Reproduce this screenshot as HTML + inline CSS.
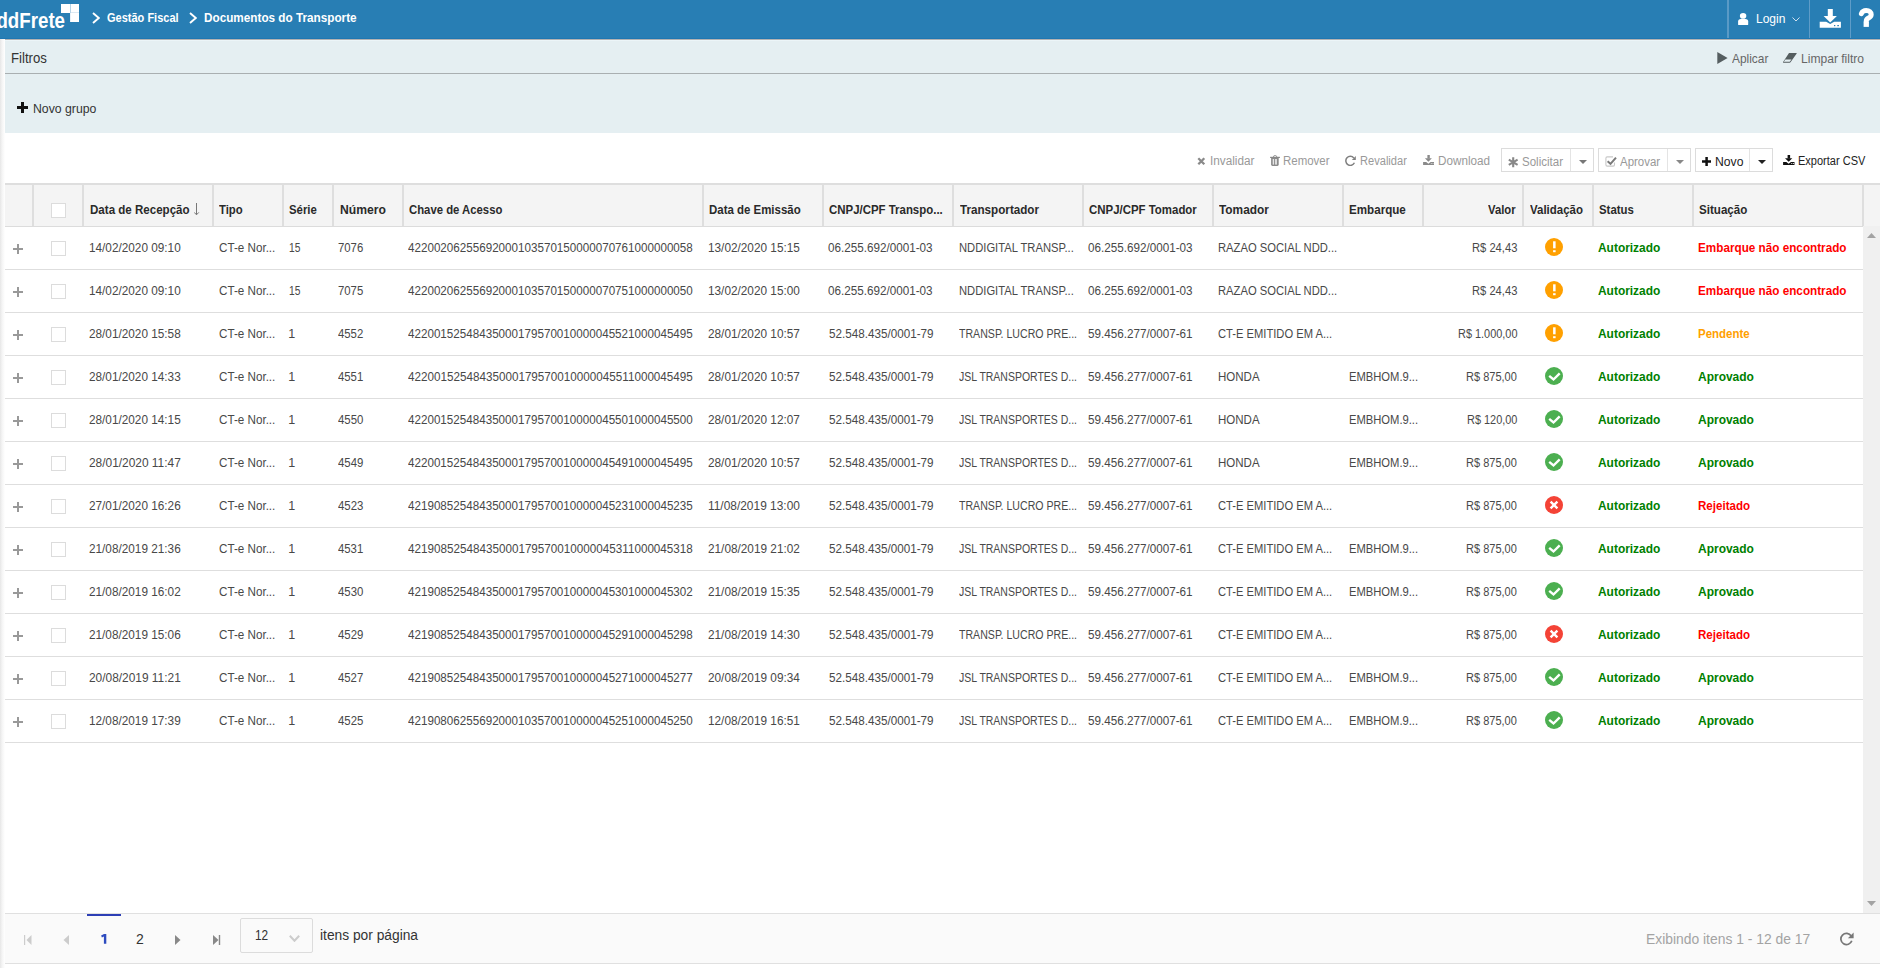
<!DOCTYPE html>
<html><head><meta charset="utf-8"><title>Documentos do Transporte</title>
<style>
html,body{margin:0;padding:0;}
body{width:1880px;height:968px;overflow:hidden;position:relative;background:#fff;font-family:"Liberation Sans", sans-serif;}
.t{position:absolute;white-space:nowrap;font-family:"Liberation Sans", sans-serif;transform-origin:0 0;}
svg{display:block;}
</style></head><body>
<div style="position:absolute;left:0;top:0;width:1880px;height:39px;background:#287eb4;"></div>
<div style="position:absolute;left:0;top:38px;width:1880px;height:1px;background:#1f77b2;"></div>
<div style="position:absolute;left:5px;top:39px;width:1875px;height:1px;background:#b3b3b3;"></div>
<span class="t" id="t0" style="left:-15.00px;top:10.50px;font-size:21.5px;line-height:21.5px;color:#fff;font-weight:bold;transform:scaleX(0.87);">nddFrete</span>
<div style="position:absolute;left:61px;top:4px;width:9px;height:8.6px;background:#fff;"></div>
<div style="position:absolute;left:70px;top:4px;width:1px;height:8.6px;background:#b5d4e8;"></div>
<div style="position:absolute;left:70px;top:12.6px;width:1px;height:9.2px;background:#e8f1f8;"></div>
<div style="position:absolute;left:71px;top:4px;width:8px;height:17.8px;background:#fff;"></div>
<div style="position:absolute;left:71px;top:12.4px;width:8px;height:0.6px;background:#dde9f2;"></div>
<svg style="position:absolute;left:91.5px;top:12px" width="8" height="12" viewBox="0 0 8 12"><polyline points="1,1 6.8,6.0 1,11" fill="none" stroke="#fff" stroke-width="1.9"/></svg>
<svg style="position:absolute;left:189.3px;top:12px" width="8" height="12" viewBox="0 0 8 12"><polyline points="1,1 6.8,6.0 1,11" fill="none" stroke="#fff" stroke-width="1.9"/></svg>
<span class="t" id="t1" style="left:107.00px;top:10.70px;font-size:13px;line-height:13px;color:#fff;transform:scaleX(0.8471);font-weight:bold;">Gestão Fiscal</span>
<span class="t" id="t2" style="left:204.38px;top:10.70px;font-size:13px;line-height:13px;color:#fff;transform:scaleX(0.9030);font-weight:bold;">Documentos do Transporte</span>
<div style="position:absolute;left:1727px;top:0;width:2px;height:38px;background:#5a9ac6;"></div>
<div style="position:absolute;left:1809px;top:0;width:1px;height:38px;background:#5e9cc8;"></div>
<div style="position:absolute;left:1850px;top:0;width:1px;height:38px;background:#5e9cc8;"></div>
<svg style="position:absolute;left:1738px;top:13px" width="11" height="13" viewBox="0 0 11 13"><ellipse cx="5.1" cy="2.9" rx="3.2" ry="2.8" fill="#fff"/><path d="M0.1 11.4 V8.6 Q0.1 5.9 2.8 5.9 H7.4 Q10.2 5.9 10.2 8.6 V11.4 Q10.2 12.1 9.5 12.1 H0.8 Q0.1 12.1 0.1 11.4 Z" fill="#fff"/></svg>
<span class="t" id="t3" style="left:1755.83px;top:11.80px;font-size:13px;line-height:13px;color:#fff;transform:scaleX(0.9236);">Login</span>
<svg style="position:absolute;left:1791.5px;top:16.5px" width="8" height="5" viewBox="0 0 8 5"><polyline points="0.5,0.5 4,4 7.5,0.5" fill="none" stroke="#cfe0ee" stroke-width="1"/></svg>
<svg style="position:absolute;left:1819px;top:9px" width="23" height="20" viewBox="0 0 23 20"><rect x="8.8" y="0" width="5" height="7.2" fill="#fff"/><path d="M4.6 6.9 H17.9 L11.2 13.6 Z" fill="#fff"/><path d="M0.7 12.75 H7.2 L11.2 14.9 L15.2 12.75 H21.9 V18.8 H0.7 Z" fill="#fff"/><rect x="15" y="16" width="1.3" height="1.2" fill="#287eb4"/><rect x="18.3" y="16" width="1.6" height="1.2" fill="#287eb4"/></svg>
<svg style="position:absolute;left:1850px;top:4px" width="30" height="28" viewBox="0 0 30 28"><path d="M11.4 9.6 C12.3 7.4 14 6.55 16.3 6.55 C19.3 6.55 21.2 8.3 21.2 10.4 C21.2 12.3 19.9 13.2 18.5 14 C17 14.8 16.25 15.6 16.25 17.3" fill="none" stroke="#fff" stroke-width="5" stroke-linecap="round"/><rect x="13.6" y="17.6" width="5.3" height="5.3" fill="#fff"/></svg>
<div style="position:absolute;left:0;top:39px;width:5px;height:929px;background:linear-gradient(to right,#e6e6e6,#f4f4f4 40%,#fff);"></div>
<div style="position:absolute;left:5px;top:40px;width:1875px;height:93px;background:#e5eff2;"></div>
<div style="position:absolute;left:5px;top:40px;width:1875px;height:1px;background:#ecf5f8;"></div>
<div style="position:absolute;left:5px;top:73px;width:1875px;height:1px;background:#a9afb1;"></div>
<span class="t" id="t4" style="left:10.62px;top:51.05px;font-size:14px;line-height:14px;color:#333;transform:scaleX(0.9426);">Filtros</span>
<svg style="position:absolute;left:1716.5px;top:52px" width="11" height="12" viewBox="0 0 11 12"><path d="M0.3 0.1 L10.6 6 L0.3 12 Z" fill="#555e60"/></svg>
<span class="t" id="t5" style="left:1732.31px;top:52.20px;font-size:13px;line-height:13px;color:#666;transform:scaleX(0.9151);">Aplicar</span>
<svg style="position:absolute;left:1781.5px;top:52px" width="16" height="12" viewBox="0 0 16 12"><path d="M7 1 H14.4 Q15.1 1 14.7 1.6 L8.5 10.3 Q8.2 10.7 7.7 10.7 H1.5 Q0.7 10.7 1.1 10.1 Z" fill="#555e60"/><path d="M3.4 7.5 H9.5 L7.7 9.8 H1.8 Z" fill="#e5eff2"/></svg>
<span class="t" id="t6" style="left:1801.14px;top:52.20px;font-size:13px;line-height:13px;color:#666;transform:scaleX(0.9289);">Limpar filtro</span>
<svg style="position:absolute;left:17px;top:102px" width="11" height="11" viewBox="0 0 11 11"><path d="M4 0 H7 V4 H11 V7 H7 V11 H4 V7 H0 V4 H4 Z" fill="#111"/></svg>
<span class="t" id="t7" style="left:32.90px;top:103.02px;font-size:12.5px;line-height:12.5px;color:#333;transform:scaleX(0.9814);">Novo grupo</span>
<svg style="position:absolute;left:1197px;top:157px" width="9" height="9" viewBox="0 0 9 9"><path d="M1.3 1.3 L7.3 7.3 M7.3 1.3 L1.3 7.3" stroke="#8a8a8a" stroke-width="2.3"/></svg>
<span class="t" id="t8" style="left:1209.62px;top:155.02px;font-size:12.5px;line-height:12.5px;color:#999;transform:scaleX(0.9406);">Invalidar</span>
<svg style="position:absolute;left:1270px;top:155px" width="11" height="12" viewBox="0 0 11 12"><path d="M3.4 2 Q3.4 0.5 5.1 0.5 Q6.8 0.5 6.8 2" fill="none" stroke="#999" stroke-width="1"/><rect x="0.1" y="1.8" width="9.8" height="1.2" fill="#888"/><path d="M1.1 3 H8.7 V9.6 Q8.7 10.9 7.4 10.9 H2.4 Q1.1 10.9 1.1 9.6 Z" fill="#8a8a8a"/><rect x="2.7" y="4" width="1.4" height="5.6" fill="#e6e6e6"/><rect x="5" y="4" width="2" height="5.6" fill="#dcdcdc"/></svg>
<span class="t" id="t9" style="left:1283.00px;top:155.02px;font-size:12.5px;line-height:12.5px;color:#999;transform:scaleX(0.9178);">Remover</span>
<svg style="position:absolute;left:1345px;top:155px" width="11" height="11" viewBox="0 0 11 11"><path d="M8.8 3 A4.5 4.5 0 1 0 9.4 7.8" fill="none" stroke="#808080" stroke-width="1.5"/><path d="M10.8 0.9 V4.9 H6.8 Z" fill="#808080"/></svg>
<span class="t" id="t10" style="left:1359.62px;top:155.02px;font-size:12.5px;line-height:12.5px;color:#999;transform:scaleX(0.8868);">Revalidar</span>
<svg style="position:absolute;left:1423px;top:155px" width="12" height="11" viewBox="0 0 12 11"><rect x="4.40" y="0" width="2.40" height="3.6" fill="#8a8a8a"/><path d="M1.90 3.3 H8.90 L5.40 6.8 Z" fill="#8a8a8a"/><path d="M0.1 7 H3.20 L5.40 8.7 L7.60 7 H11.00 V9.9 H0.1 Z" fill="#8a8a8a"/><rect x="7.80" y="8.2" width="1.10" height="0.8" fill="#ddd"/><rect x="9.50" y="8.2" width="1.10" height="0.8" fill="#ddd"/></svg>
<span class="t" id="t11" style="left:1438.00px;top:155.02px;font-size:12.5px;line-height:12.5px;color:#999;transform:scaleX(0.9359);">Download</span>
<div style="position:absolute;left:1501px;top:148px;width:91px;height:22px;border:1px solid #dcdcdc;background:#fff;"></div><div style="position:absolute;left:1570px;top:149px;width:1px;height:22px;background:#e4e4e4;"></div>
<div style="position:absolute;left:1598px;top:148px;width:91px;height:22px;border:1px solid #dcdcdc;background:#fff;"></div><div style="position:absolute;left:1667px;top:149px;width:1px;height:22px;background:#e4e4e4;"></div>
<div style="position:absolute;left:1695px;top:148px;width:76px;height:22px;border:1px solid #dcdcdc;background:#fff;"></div><div style="position:absolute;left:1749px;top:149px;width:1px;height:22px;background:#e4e4e4;"></div>
<svg style="position:absolute;left:1508.2px;top:156.5px" width="11" height="11" viewBox="0 0 11 11"><path d="M5.2 0.2 V10.3 M0.8 2.7 L9.6 7.8 M9.6 2.7 L0.8 7.8" stroke="#888" stroke-width="2.1"/></svg>
<span class="t" id="t12" style="left:1522.23px;top:155.92px;font-size:12.5px;line-height:12.5px;color:#999;transform:scaleX(0.9233);">Solicitar</span>
<svg style="position:absolute;left:1579.2px;top:160px" width="8" height="4" viewBox="0 0 8 4"><path d="M0 0 H8 L4 4 Z" fill="#777"/></svg>
<svg style="position:absolute;left:1604.5px;top:156px" width="12" height="11" viewBox="0 0 12 11"><path d="M8 0.9 H2.2 Q0.9 0.9 0.9 2.2 V8.8 Q0.9 10.1 2.2 10.1 H8.2 Q9.5 10.1 9.5 8.8 V6.5" fill="none" stroke="#c8c8c8" stroke-width="1.1"/><path d="M2.6 5.3 L5.5 7.8 L11 1.6" fill="none" stroke="#7a7a7a" stroke-width="2"/></svg>
<span class="t" id="t13" style="left:1620.00px;top:155.92px;font-size:12.5px;line-height:12.5px;color:#999;transform:scaleX(0.9183);">Aprovar</span>
<svg style="position:absolute;left:1676px;top:160px" width="8" height="4" viewBox="0 0 8 4"><path d="M0 0 H8 L4 4 Z" fill="#888"/></svg>
<svg style="position:absolute;left:1702px;top:156.7px" width="9.2" height="9.2" viewBox="0 0 9.2 9.2"><path d="M3.35 0 H5.85 V3.35 H9.2 V5.85 H5.85 V9.2 H3.35 V5.85 H0 V3.35 H3.35 Z" fill="#111"/></svg>
<span class="t" id="t14" style="left:1715.00px;top:155.92px;font-size:12.5px;line-height:12.5px;color:#222;transform:scaleX(0.9729);">Novo</span>
<svg style="position:absolute;left:1758px;top:160px" width="8" height="4" viewBox="0 0 8 4"><path d="M0 0 H8 L4 4 Z" fill="#222"/></svg>
<svg style="position:absolute;left:1783px;top:155px" width="12.5" height="11" viewBox="0 0 12.5 11"><rect x="4.60" y="0" width="2.51" height="3.6" fill="#111"/><path d="M1.99 3.3 H9.30 L5.65 6.8 Z" fill="#111"/><path d="M0.1 7 H3.35 L5.65 8.7 L7.95 7 H11.50 V9.9 H0.1 Z" fill="#111"/><rect x="8.15" y="8.2" width="1.15" height="0.8" fill="#fff"/><rect x="9.93" y="8.2" width="1.15" height="0.8" fill="#fff"/></svg>
<span class="t" id="t15" style="left:1797.93px;top:155.02px;font-size:12.5px;line-height:12.5px;color:#222;transform:scaleX(0.8818);">Exportar CSV</span>
<div style="position:absolute;left:5px;top:183px;width:1875px;height:2px;background:#dedede;"></div>
<div style="position:absolute;left:5px;top:185px;width:1875px;height:41px;background:#f4f4f4;"></div>
<div style="position:absolute;left:5px;top:226px;width:1858px;height:1px;background:#dcdcdc;"></div>
<div style="position:absolute;left:32px;top:185px;width:2px;height:41px;background:#dedede;"></div>
<div style="position:absolute;left:82px;top:185px;width:2px;height:41px;background:#dedede;"></div>
<div style="position:absolute;left:212px;top:185px;width:2px;height:41px;background:#dedede;"></div>
<div style="position:absolute;left:282px;top:185px;width:2px;height:41px;background:#dedede;"></div>
<div style="position:absolute;left:332px;top:185px;width:2px;height:41px;background:#dedede;"></div>
<div style="position:absolute;left:402px;top:185px;width:2px;height:41px;background:#dedede;"></div>
<div style="position:absolute;left:702px;top:185px;width:2px;height:41px;background:#dedede;"></div>
<div style="position:absolute;left:822px;top:185px;width:2px;height:41px;background:#dedede;"></div>
<div style="position:absolute;left:952px;top:185px;width:2px;height:41px;background:#dedede;"></div>
<div style="position:absolute;left:1082px;top:185px;width:2px;height:41px;background:#dedede;"></div>
<div style="position:absolute;left:1212px;top:185px;width:2px;height:41px;background:#dedede;"></div>
<div style="position:absolute;left:1342px;top:185px;width:2px;height:41px;background:#dedede;"></div>
<div style="position:absolute;left:1422px;top:185px;width:2px;height:41px;background:#dedede;"></div>
<div style="position:absolute;left:1522px;top:185px;width:2px;height:41px;background:#dedede;"></div>
<div style="position:absolute;left:1592px;top:185px;width:2px;height:41px;background:#dedede;"></div>
<div style="position:absolute;left:1692px;top:185px;width:2px;height:41px;background:#dedede;"></div>
<div style="position:absolute;left:1862px;top:185px;width:2px;height:41px;background:#dedede;"></div>
<div style="position:absolute;left:51px;top:203px;width:13px;height:13px;border:1px solid #dcdcdc;background:#fff;"></div>
<span class="t" id="t16" style="left:89.87px;top:203.00px;font-size:13px;line-height:13px;color:#2a2a2a;transform:scaleX(0.8893);font-weight:bold;">Data de Recepção</span>
<span class="t" id="t17" style="left:219.06px;top:203.00px;font-size:13px;line-height:13px;color:#2a2a2a;transform:scaleX(0.8723);font-weight:bold;">Tipo</span>
<span class="t" id="t18" style="left:289.31px;top:203.00px;font-size:13px;line-height:13px;color:#2a2a2a;transform:scaleX(0.8750);font-weight:bold;">Série</span>
<span class="t" id="t19" style="left:339.54px;top:203.00px;font-size:13px;line-height:13px;color:#2a2a2a;transform:scaleX(0.9349);font-weight:bold;">Número</span>
<span class="t" id="t20" style="left:409.00px;top:203.00px;font-size:13px;line-height:13px;color:#2a2a2a;transform:scaleX(0.8711);font-weight:bold;">Chave de Acesso</span>
<span class="t" id="t21" style="left:709.38px;top:203.00px;font-size:13px;line-height:13px;color:#2a2a2a;transform:scaleX(0.8808);font-weight:bold;">Data de Emissão</span>
<span class="t" id="t22" style="left:829.00px;top:203.00px;font-size:13px;line-height:13px;color:#2a2a2a;transform:scaleX(0.8796);font-weight:bold;">CNPJ/CPF Transpo...</span>
<span class="t" id="t23" style="left:959.76px;top:203.00px;font-size:13px;line-height:13px;color:#2a2a2a;transform:scaleX(0.8967);font-weight:bold;">Transportador</span>
<span class="t" id="t24" style="left:1089.00px;top:203.00px;font-size:13px;line-height:13px;color:#2a2a2a;transform:scaleX(0.8797);font-weight:bold;">CNPJ/CPF Tomador</span>
<span class="t" id="t25" style="left:1219.00px;top:203.00px;font-size:13px;line-height:13px;color:#2a2a2a;transform:scaleX(0.9129);font-weight:bold;">Tomador</span>
<span class="t" id="t26" style="left:1349.00px;top:203.00px;font-size:13px;line-height:13px;color:#2a2a2a;transform:scaleX(0.8939);font-weight:bold;">Embarque</span>
<span class="t" id="t27" style="left:1488.43px;top:203.00px;font-size:13px;line-height:13px;color:#2a2a2a;transform:scaleX(0.8668);font-weight:bold;">Valor</span>
<span class="t" id="t28" style="left:1529.75px;top:203.00px;font-size:13px;line-height:13px;color:#2a2a2a;transform:scaleX(0.8821);font-weight:bold;">Validação</span>
<span class="t" id="t29" style="left:1598.68px;top:203.00px;font-size:13px;line-height:13px;color:#2a2a2a;transform:scaleX(0.8756);font-weight:bold;">Status</span>
<span class="t" id="t30" style="left:1699.31px;top:203.00px;font-size:13px;line-height:13px;color:#2a2a2a;transform:scaleX(0.8927);font-weight:bold;">Situação</span>
<svg style="position:absolute;left:194px;top:203px" width="6" height="13" viewBox="0 0 6 13"><path d="M2.5 0 V11.6" stroke="#777" stroke-width="1"/><path d="M0.2 9.4 L2.5 11.8 L4.8 9.4" fill="none" stroke="#777" stroke-width="1"/></svg>
<div style="position:absolute;left:5px;top:269px;width:1858px;height:1px;background:#dedede;"></div>
<svg style="position:absolute;left:13px;top:243.5px" width="10" height="10" viewBox="0 0 10 10"><path d="M4 0 H6 V4 H10 V6 H6 V10 H4 V6 H0 V4 H4 Z" fill="#999"/></svg>
<div style="position:absolute;left:51px;top:241px;width:13px;height:13px;border:1px solid #dcdcdc;background:#fff;"></div>
<span class="t" id="t31" style="left:88.61px;top:242.22px;font-size:12.5px;line-height:12.5px;color:#484848;transform:scaleX(0.9423);">14/02/2020 09:10</span>
<span class="t" id="t32" style="left:218.83px;top:242.22px;font-size:12.5px;line-height:12.5px;color:#484848;transform:scaleX(0.9325);">CT-e Nor...</span>
<span class="t" id="t33" style="left:289.34px;top:242.22px;font-size:12.5px;line-height:12.5px;color:#484848;transform:scaleX(0.8180);">15</span>
<span class="t" id="t34" style="left:338.23px;top:242.22px;font-size:12.5px;line-height:12.5px;color:#484848;transform:scaleX(0.9080);">7076</span>
<span class="t" id="t35" style="left:408.00px;top:242.22px;font-size:12.5px;line-height:12.5px;color:#484848;transform:scaleX(0.9310);">42200206255692000103570150000070761000000058</span>
<span class="t" id="t36" style="left:708.00px;top:242.22px;font-size:12.5px;line-height:12.5px;color:#484848;transform:scaleX(0.9437);">13/02/2020 15:15</span>
<span class="t" id="t37" style="left:828.46px;top:242.22px;font-size:12.5px;line-height:12.5px;color:#484848;transform:scaleX(0.9346);">06.255.692/0001-03</span>
<span class="t" id="t38" style="left:958.86px;top:242.22px;font-size:12.5px;line-height:12.5px;color:#484848;transform:scaleX(0.8969);">NDDIGITAL TRANSP...</span>
<span class="t" id="t39" style="left:1088.08px;top:242.22px;font-size:12.5px;line-height:12.5px;color:#484848;transform:scaleX(0.9340);">06.255.692/0001-03</span>
<span class="t" id="t40" style="left:1218.06px;top:242.22px;font-size:12.5px;line-height:12.5px;color:#484848;transform:scaleX(0.8971);">RAZAO SOCIAL NDD...</span>
<span class="t" id="t41" style="left:1472.23px;top:242.22px;font-size:12.5px;line-height:12.5px;color:#484848;transform:scaleX(0.8944);">R$ 24,43</span>
<svg style="position:absolute;left:1545.1px;top:238px" width="18" height="18" viewBox="0 0 18 18"><circle cx="9" cy="9" r="9" fill="#ffa000"/><rect x="8.1" y="3.3" width="2.5" height="7" fill="#fff"/><rect x="8.1" y="12.2" width="2.5" height="2" fill="#fff"/></svg>
<span class="t" id="t42" style="left:1597.69px;top:241.00px;font-size:13px;line-height:13px;color:#008000;transform:scaleX(0.9178);font-weight:bold;">Autorizado</span>
<span class="t" id="t43" style="left:1698.38px;top:241.00px;font-size:13px;line-height:13px;color:#f00;transform:scaleX(0.9018);font-weight:bold;">Embarque não encontrado</span>
<div style="position:absolute;left:5px;top:312px;width:1858px;height:1px;background:#dedede;"></div>
<svg style="position:absolute;left:13px;top:286.5px" width="10" height="10" viewBox="0 0 10 10"><path d="M4 0 H6 V4 H10 V6 H6 V10 H4 V6 H0 V4 H4 Z" fill="#999"/></svg>
<div style="position:absolute;left:51px;top:284px;width:13px;height:13px;border:1px solid #dcdcdc;background:#fff;"></div>
<span class="t" id="t44" style="left:88.61px;top:285.22px;font-size:12.5px;line-height:12.5px;color:#484848;transform:scaleX(0.9423);">14/02/2020 09:10</span>
<span class="t" id="t45" style="left:218.83px;top:285.22px;font-size:12.5px;line-height:12.5px;color:#484848;transform:scaleX(0.9325);">CT-e Nor...</span>
<span class="t" id="t46" style="left:289.34px;top:285.22px;font-size:12.5px;line-height:12.5px;color:#484848;transform:scaleX(0.8180);">15</span>
<span class="t" id="t47" style="left:338.23px;top:285.22px;font-size:12.5px;line-height:12.5px;color:#484848;transform:scaleX(0.9080);">7075</span>
<span class="t" id="t48" style="left:408.00px;top:285.22px;font-size:12.5px;line-height:12.5px;color:#484848;transform:scaleX(0.9310);">42200206255692000103570150000070751000000050</span>
<span class="t" id="t49" style="left:708.00px;top:285.22px;font-size:12.5px;line-height:12.5px;color:#484848;transform:scaleX(0.9437);">13/02/2020 15:00</span>
<span class="t" id="t50" style="left:828.46px;top:285.22px;font-size:12.5px;line-height:12.5px;color:#484848;transform:scaleX(0.9346);">06.255.692/0001-03</span>
<span class="t" id="t51" style="left:958.86px;top:285.22px;font-size:12.5px;line-height:12.5px;color:#484848;transform:scaleX(0.8969);">NDDIGITAL TRANSP...</span>
<span class="t" id="t52" style="left:1088.08px;top:285.22px;font-size:12.5px;line-height:12.5px;color:#484848;transform:scaleX(0.9340);">06.255.692/0001-03</span>
<span class="t" id="t53" style="left:1218.06px;top:285.22px;font-size:12.5px;line-height:12.5px;color:#484848;transform:scaleX(0.8971);">RAZAO SOCIAL NDD...</span>
<span class="t" id="t54" style="left:1472.23px;top:285.22px;font-size:12.5px;line-height:12.5px;color:#484848;transform:scaleX(0.8944);">R$ 24,43</span>
<svg style="position:absolute;left:1545.1px;top:281px" width="18" height="18" viewBox="0 0 18 18"><circle cx="9" cy="9" r="9" fill="#ffa000"/><rect x="8.1" y="3.3" width="2.5" height="7" fill="#fff"/><rect x="8.1" y="12.2" width="2.5" height="2" fill="#fff"/></svg>
<span class="t" id="t55" style="left:1597.69px;top:284.00px;font-size:13px;line-height:13px;color:#008000;transform:scaleX(0.9178);font-weight:bold;">Autorizado</span>
<span class="t" id="t56" style="left:1698.38px;top:284.00px;font-size:13px;line-height:13px;color:#f00;transform:scaleX(0.9018);font-weight:bold;">Embarque não encontrado</span>
<div style="position:absolute;left:5px;top:355px;width:1858px;height:1px;background:#dedede;"></div>
<svg style="position:absolute;left:13px;top:329.5px" width="10" height="10" viewBox="0 0 10 10"><path d="M4 0 H6 V4 H10 V6 H6 V10 H4 V6 H0 V4 H4 Z" fill="#999"/></svg>
<div style="position:absolute;left:51px;top:327px;width:13px;height:13px;border:1px solid #dcdcdc;background:#fff;"></div>
<span class="t" id="t57" style="left:88.61px;top:328.22px;font-size:12.5px;line-height:12.5px;color:#484848;transform:scaleX(0.9423);">28/01/2020 15:58</span>
<span class="t" id="t58" style="left:218.83px;top:328.22px;font-size:12.5px;line-height:12.5px;color:#484848;transform:scaleX(0.9325);">CT-e Nor...</span>
<span class="t" id="t59" style="left:288.30px;top:328.22px;font-size:12.5px;line-height:12.5px;color:#484848;">1</span>
<span class="t" id="t60" style="left:338.17px;top:328.22px;font-size:12.5px;line-height:12.5px;color:#484848;transform:scaleX(0.9080);">4552</span>
<span class="t" id="t61" style="left:408.00px;top:328.22px;font-size:12.5px;line-height:12.5px;color:#484848;transform:scaleX(0.9310);">42200152548435000179570010000045521000045495</span>
<span class="t" id="t62" style="left:708.00px;top:328.22px;font-size:12.5px;line-height:12.5px;color:#484848;transform:scaleX(0.9438);">28/01/2020 10:57</span>
<span class="t" id="t63" style="left:828.53px;top:328.22px;font-size:12.5px;line-height:12.5px;color:#484848;transform:scaleX(0.9340);">52.548.435/0001-79</span>
<span class="t" id="t64" style="left:958.69px;top:328.22px;font-size:12.5px;line-height:12.5px;color:#484848;transform:scaleX(0.8469);">TRANSP. LUCRO PRE...</span>
<span class="t" id="t65" style="left:1088.08px;top:328.22px;font-size:12.5px;line-height:12.5px;color:#484848;transform:scaleX(0.9340);">59.456.277/0007-61</span>
<span class="t" id="t66" style="left:1218.07px;top:328.22px;font-size:12.5px;line-height:12.5px;color:#484848;transform:scaleX(0.8937);">CT-E EMITIDO EM A...</span>
<span class="t" id="t67" style="left:1457.61px;top:328.22px;font-size:12.5px;line-height:12.5px;color:#484848;transform:scaleX(0.8736);">R$ 1.000,00</span>
<svg style="position:absolute;left:1545.1px;top:324px" width="18" height="18" viewBox="0 0 18 18"><circle cx="9" cy="9" r="9" fill="#ffa000"/><rect x="8.1" y="3.3" width="2.5" height="7" fill="#fff"/><rect x="8.1" y="12.2" width="2.5" height="2" fill="#fff"/></svg>
<span class="t" id="t68" style="left:1597.69px;top:327.00px;font-size:13px;line-height:13px;color:#008000;transform:scaleX(0.9178);font-weight:bold;">Autorizado</span>
<span class="t" id="t69" style="left:1698.39px;top:327.00px;font-size:13px;line-height:13px;color:#ffa000;transform:scaleX(0.8832);font-weight:bold;">Pendente</span>
<div style="position:absolute;left:5px;top:398px;width:1858px;height:1px;background:#dedede;"></div>
<svg style="position:absolute;left:13px;top:372.5px" width="10" height="10" viewBox="0 0 10 10"><path d="M4 0 H6 V4 H10 V6 H6 V10 H4 V6 H0 V4 H4 Z" fill="#999"/></svg>
<div style="position:absolute;left:51px;top:370px;width:13px;height:13px;border:1px solid #dcdcdc;background:#fff;"></div>
<span class="t" id="t70" style="left:88.61px;top:371.22px;font-size:12.5px;line-height:12.5px;color:#484848;transform:scaleX(0.9423);">28/01/2020 14:33</span>
<span class="t" id="t71" style="left:218.83px;top:371.22px;font-size:12.5px;line-height:12.5px;color:#484848;transform:scaleX(0.9325);">CT-e Nor...</span>
<span class="t" id="t72" style="left:288.30px;top:371.22px;font-size:12.5px;line-height:12.5px;color:#484848;">1</span>
<span class="t" id="t73" style="left:338.17px;top:371.22px;font-size:12.5px;line-height:12.5px;color:#484848;transform:scaleX(0.9080);">4551</span>
<span class="t" id="t74" style="left:408.00px;top:371.22px;font-size:12.5px;line-height:12.5px;color:#484848;transform:scaleX(0.9340);">42200152548435000179570010000045511000045495</span>
<span class="t" id="t75" style="left:708.00px;top:371.22px;font-size:12.5px;line-height:12.5px;color:#484848;transform:scaleX(0.9438);">28/01/2020 10:57</span>
<span class="t" id="t76" style="left:828.53px;top:371.22px;font-size:12.5px;line-height:12.5px;color:#484848;transform:scaleX(0.9340);">52.548.435/0001-79</span>
<span class="t" id="t77" style="left:958.74px;top:371.22px;font-size:12.5px;line-height:12.5px;color:#484848;transform:scaleX(0.8384);">JSL TRANSPORTES D...</span>
<span class="t" id="t78" style="left:1088.00px;top:371.22px;font-size:12.5px;line-height:12.5px;color:#484848;transform:scaleX(0.9346);">59.456.277/0007-61</span>
<span class="t" id="t79" style="left:1218.07px;top:371.22px;font-size:12.5px;line-height:12.5px;color:#484848;transform:scaleX(0.9219);">HONDA</span>
<span class="t" id="t80" style="left:1348.85px;top:371.22px;font-size:12.5px;line-height:12.5px;color:#484848;transform:scaleX(0.8963);">EMBHOM.9...</span>
<span class="t" id="t81" style="left:1466.38px;top:371.22px;font-size:12.5px;line-height:12.5px;color:#484848;transform:scaleX(0.8812);">R$ 875,00</span>
<svg style="position:absolute;left:1545.1px;top:367px" width="18" height="18" viewBox="0 0 18 18"><circle cx="9" cy="9" r="9" fill="#4caf50"/><polyline points="4.2,8.9 8.5,12.5 14.7,6.4" fill="none" stroke="#fff" stroke-width="2.4"/></svg>
<span class="t" id="t82" style="left:1597.69px;top:370.00px;font-size:13px;line-height:13px;color:#008000;transform:scaleX(0.9178);font-weight:bold;">Autorizado</span>
<span class="t" id="t83" style="left:1698.38px;top:370.00px;font-size:13px;line-height:13px;color:#008000;transform:scaleX(0.9215);font-weight:bold;">Aprovado</span>
<div style="position:absolute;left:5px;top:441px;width:1858px;height:1px;background:#dedede;"></div>
<svg style="position:absolute;left:13px;top:415.5px" width="10" height="10" viewBox="0 0 10 10"><path d="M4 0 H6 V4 H10 V6 H6 V10 H4 V6 H0 V4 H4 Z" fill="#999"/></svg>
<div style="position:absolute;left:51px;top:413px;width:13px;height:13px;border:1px solid #dcdcdc;background:#fff;"></div>
<span class="t" id="t84" style="left:88.61px;top:414.22px;font-size:12.5px;line-height:12.5px;color:#484848;transform:scaleX(0.9423);">28/01/2020 14:15</span>
<span class="t" id="t85" style="left:218.83px;top:414.22px;font-size:12.5px;line-height:12.5px;color:#484848;transform:scaleX(0.9325);">CT-e Nor...</span>
<span class="t" id="t86" style="left:288.30px;top:414.22px;font-size:12.5px;line-height:12.5px;color:#484848;">1</span>
<span class="t" id="t87" style="left:338.12px;top:414.22px;font-size:12.5px;line-height:12.5px;color:#484848;transform:scaleX(0.9117);">4550</span>
<span class="t" id="t88" style="left:408.00px;top:414.22px;font-size:12.5px;line-height:12.5px;color:#484848;transform:scaleX(0.9310);">42200152548435000179570010000045501000045500</span>
<span class="t" id="t89" style="left:708.00px;top:414.22px;font-size:12.5px;line-height:12.5px;color:#484848;transform:scaleX(0.9438);">28/01/2020 12:07</span>
<span class="t" id="t90" style="left:828.53px;top:414.22px;font-size:12.5px;line-height:12.5px;color:#484848;transform:scaleX(0.9340);">52.548.435/0001-79</span>
<span class="t" id="t91" style="left:958.74px;top:414.22px;font-size:12.5px;line-height:12.5px;color:#484848;transform:scaleX(0.8384);">JSL TRANSPORTES D...</span>
<span class="t" id="t92" style="left:1088.00px;top:414.22px;font-size:12.5px;line-height:12.5px;color:#484848;transform:scaleX(0.9346);">59.456.277/0007-61</span>
<span class="t" id="t93" style="left:1218.07px;top:414.22px;font-size:12.5px;line-height:12.5px;color:#484848;transform:scaleX(0.9219);">HONDA</span>
<span class="t" id="t94" style="left:1348.85px;top:414.22px;font-size:12.5px;line-height:12.5px;color:#484848;transform:scaleX(0.8963);">EMBHOM.9...</span>
<span class="t" id="t95" style="left:1467.22px;top:414.22px;font-size:12.5px;line-height:12.5px;color:#484848;transform:scaleX(0.8741);">R$ 120,00</span>
<svg style="position:absolute;left:1545.1px;top:410px" width="18" height="18" viewBox="0 0 18 18"><circle cx="9" cy="9" r="9" fill="#4caf50"/><polyline points="4.2,8.9 8.5,12.5 14.7,6.4" fill="none" stroke="#fff" stroke-width="2.4"/></svg>
<span class="t" id="t96" style="left:1597.69px;top:413.00px;font-size:13px;line-height:13px;color:#008000;transform:scaleX(0.9178);font-weight:bold;">Autorizado</span>
<span class="t" id="t97" style="left:1698.38px;top:413.00px;font-size:13px;line-height:13px;color:#008000;transform:scaleX(0.9215);font-weight:bold;">Aprovado</span>
<div style="position:absolute;left:5px;top:484px;width:1858px;height:1px;background:#dedede;"></div>
<svg style="position:absolute;left:13px;top:458.5px" width="10" height="10" viewBox="0 0 10 10"><path d="M4 0 H6 V4 H10 V6 H6 V10 H4 V6 H0 V4 H4 Z" fill="#999"/></svg>
<div style="position:absolute;left:51px;top:456px;width:13px;height:13px;border:1px solid #dcdcdc;background:#fff;"></div>
<span class="t" id="t98" style="left:88.61px;top:457.22px;font-size:12.5px;line-height:12.5px;color:#484848;transform:scaleX(0.9521);">28/01/2020 11:47</span>
<span class="t" id="t99" style="left:218.83px;top:457.22px;font-size:12.5px;line-height:12.5px;color:#484848;transform:scaleX(0.9325);">CT-e Nor...</span>
<span class="t" id="t100" style="left:288.30px;top:457.22px;font-size:12.5px;line-height:12.5px;color:#484848;">1</span>
<span class="t" id="t101" style="left:338.12px;top:457.22px;font-size:12.5px;line-height:12.5px;color:#484848;transform:scaleX(0.9117);">4549</span>
<span class="t" id="t102" style="left:408.00px;top:457.22px;font-size:12.5px;line-height:12.5px;color:#484848;transform:scaleX(0.9310);">42200152548435000179570010000045491000045495</span>
<span class="t" id="t103" style="left:708.00px;top:457.22px;font-size:12.5px;line-height:12.5px;color:#484848;transform:scaleX(0.9438);">28/01/2020 10:57</span>
<span class="t" id="t104" style="left:828.53px;top:457.22px;font-size:12.5px;line-height:12.5px;color:#484848;transform:scaleX(0.9340);">52.548.435/0001-79</span>
<span class="t" id="t105" style="left:958.74px;top:457.22px;font-size:12.5px;line-height:12.5px;color:#484848;transform:scaleX(0.8384);">JSL TRANSPORTES D...</span>
<span class="t" id="t106" style="left:1088.00px;top:457.22px;font-size:12.5px;line-height:12.5px;color:#484848;transform:scaleX(0.9346);">59.456.277/0007-61</span>
<span class="t" id="t107" style="left:1218.07px;top:457.22px;font-size:12.5px;line-height:12.5px;color:#484848;transform:scaleX(0.9219);">HONDA</span>
<span class="t" id="t108" style="left:1348.85px;top:457.22px;font-size:12.5px;line-height:12.5px;color:#484848;transform:scaleX(0.8963);">EMBHOM.9...</span>
<span class="t" id="t109" style="left:1466.38px;top:457.22px;font-size:12.5px;line-height:12.5px;color:#484848;transform:scaleX(0.8812);">R$ 875,00</span>
<svg style="position:absolute;left:1545.1px;top:453px" width="18" height="18" viewBox="0 0 18 18"><circle cx="9" cy="9" r="9" fill="#4caf50"/><polyline points="4.2,8.9 8.5,12.5 14.7,6.4" fill="none" stroke="#fff" stroke-width="2.4"/></svg>
<span class="t" id="t110" style="left:1597.69px;top:456.00px;font-size:13px;line-height:13px;color:#008000;transform:scaleX(0.9178);font-weight:bold;">Autorizado</span>
<span class="t" id="t111" style="left:1698.38px;top:456.00px;font-size:13px;line-height:13px;color:#008000;transform:scaleX(0.9215);font-weight:bold;">Aprovado</span>
<div style="position:absolute;left:5px;top:527px;width:1858px;height:1px;background:#dedede;"></div>
<svg style="position:absolute;left:13px;top:501.5px" width="10" height="10" viewBox="0 0 10 10"><path d="M4 0 H6 V4 H10 V6 H6 V10 H4 V6 H0 V4 H4 Z" fill="#999"/></svg>
<div style="position:absolute;left:51px;top:499px;width:13px;height:13px;border:1px solid #dcdcdc;background:#fff;"></div>
<span class="t" id="t112" style="left:88.61px;top:500.22px;font-size:12.5px;line-height:12.5px;color:#484848;transform:scaleX(0.9423);">27/01/2020 16:26</span>
<span class="t" id="t113" style="left:218.83px;top:500.22px;font-size:12.5px;line-height:12.5px;color:#484848;transform:scaleX(0.9325);">CT-e Nor...</span>
<span class="t" id="t114" style="left:288.30px;top:500.22px;font-size:12.5px;line-height:12.5px;color:#484848;">1</span>
<span class="t" id="t115" style="left:338.14px;top:500.22px;font-size:12.5px;line-height:12.5px;color:#484848;transform:scaleX(0.9132);">4523</span>
<span class="t" id="t116" style="left:408.00px;top:500.22px;font-size:12.5px;line-height:12.5px;color:#484848;transform:scaleX(0.9310);">42190852548435000179570010000045231000045235</span>
<span class="t" id="t117" style="left:708.02px;top:500.22px;font-size:12.5px;line-height:12.5px;color:#484848;transform:scaleX(0.9533);">11/08/2019 13:00</span>
<span class="t" id="t118" style="left:828.53px;top:500.22px;font-size:12.5px;line-height:12.5px;color:#484848;transform:scaleX(0.9340);">52.548.435/0001-79</span>
<span class="t" id="t119" style="left:958.69px;top:500.22px;font-size:12.5px;line-height:12.5px;color:#484848;transform:scaleX(0.8469);">TRANSP. LUCRO PRE...</span>
<span class="t" id="t120" style="left:1088.08px;top:500.22px;font-size:12.5px;line-height:12.5px;color:#484848;transform:scaleX(0.9340);">59.456.277/0007-61</span>
<span class="t" id="t121" style="left:1218.07px;top:500.22px;font-size:12.5px;line-height:12.5px;color:#484848;transform:scaleX(0.8937);">CT-E EMITIDO EM A...</span>
<span class="t" id="t122" style="left:1466.38px;top:500.22px;font-size:12.5px;line-height:12.5px;color:#484848;transform:scaleX(0.8812);">R$ 875,00</span>
<svg style="position:absolute;left:1545.1px;top:496px" width="18" height="18" viewBox="0 0 18 18"><circle cx="9" cy="9" r="9" fill="#f44336"/><path d="M5.6 5.6 L12.4 12.4 M12.4 5.6 L5.6 12.4" stroke="#fff" stroke-width="2.4"/></svg>
<span class="t" id="t123" style="left:1597.69px;top:499.00px;font-size:13px;line-height:13px;color:#008000;transform:scaleX(0.9178);font-weight:bold;">Autorizado</span>
<span class="t" id="t124" style="left:1698.38px;top:499.00px;font-size:13px;line-height:13px;color:#f00;transform:scaleX(0.8899);font-weight:bold;">Rejeitado</span>
<div style="position:absolute;left:5px;top:570px;width:1858px;height:1px;background:#dedede;"></div>
<svg style="position:absolute;left:13px;top:544.5px" width="10" height="10" viewBox="0 0 10 10"><path d="M4 0 H6 V4 H10 V6 H6 V10 H4 V6 H0 V4 H4 Z" fill="#999"/></svg>
<div style="position:absolute;left:51px;top:542px;width:13px;height:13px;border:1px solid #dcdcdc;background:#fff;"></div>
<span class="t" id="t125" style="left:88.61px;top:543.22px;font-size:12.5px;line-height:12.5px;color:#484848;transform:scaleX(0.9423);">21/08/2019 21:36</span>
<span class="t" id="t126" style="left:218.83px;top:543.22px;font-size:12.5px;line-height:12.5px;color:#484848;transform:scaleX(0.9325);">CT-e Nor...</span>
<span class="t" id="t127" style="left:288.30px;top:543.22px;font-size:12.5px;line-height:12.5px;color:#484848;">1</span>
<span class="t" id="t128" style="left:338.17px;top:543.22px;font-size:12.5px;line-height:12.5px;color:#484848;transform:scaleX(0.9080);">4531</span>
<span class="t" id="t129" style="left:408.00px;top:543.22px;font-size:12.5px;line-height:12.5px;color:#484848;transform:scaleX(0.9340);">42190852548435000179570010000045311000045318</span>
<span class="t" id="t130" style="left:708.00px;top:543.22px;font-size:12.5px;line-height:12.5px;color:#484848;transform:scaleX(0.9437);">21/08/2019 21:02</span>
<span class="t" id="t131" style="left:828.53px;top:543.22px;font-size:12.5px;line-height:12.5px;color:#484848;transform:scaleX(0.9340);">52.548.435/0001-79</span>
<span class="t" id="t132" style="left:958.74px;top:543.22px;font-size:12.5px;line-height:12.5px;color:#484848;transform:scaleX(0.8384);">JSL TRANSPORTES D...</span>
<span class="t" id="t133" style="left:1088.00px;top:543.22px;font-size:12.5px;line-height:12.5px;color:#484848;transform:scaleX(0.9346);">59.456.277/0007-61</span>
<span class="t" id="t134" style="left:1218.07px;top:543.22px;font-size:12.5px;line-height:12.5px;color:#484848;transform:scaleX(0.8937);">CT-E EMITIDO EM A...</span>
<span class="t" id="t135" style="left:1348.85px;top:543.22px;font-size:12.5px;line-height:12.5px;color:#484848;transform:scaleX(0.8963);">EMBHOM.9...</span>
<span class="t" id="t136" style="left:1466.38px;top:543.22px;font-size:12.5px;line-height:12.5px;color:#484848;transform:scaleX(0.8812);">R$ 875,00</span>
<svg style="position:absolute;left:1545.1px;top:539px" width="18" height="18" viewBox="0 0 18 18"><circle cx="9" cy="9" r="9" fill="#4caf50"/><polyline points="4.2,8.9 8.5,12.5 14.7,6.4" fill="none" stroke="#fff" stroke-width="2.4"/></svg>
<span class="t" id="t137" style="left:1597.69px;top:542.00px;font-size:13px;line-height:13px;color:#008000;transform:scaleX(0.9178);font-weight:bold;">Autorizado</span>
<span class="t" id="t138" style="left:1698.38px;top:542.00px;font-size:13px;line-height:13px;color:#008000;transform:scaleX(0.9215);font-weight:bold;">Aprovado</span>
<div style="position:absolute;left:5px;top:613px;width:1858px;height:1px;background:#dedede;"></div>
<svg style="position:absolute;left:13px;top:587.5px" width="10" height="10" viewBox="0 0 10 10"><path d="M4 0 H6 V4 H10 V6 H6 V10 H4 V6 H0 V4 H4 Z" fill="#999"/></svg>
<div style="position:absolute;left:51px;top:585px;width:13px;height:13px;border:1px solid #dcdcdc;background:#fff;"></div>
<span class="t" id="t139" style="left:88.61px;top:586.22px;font-size:12.5px;line-height:12.5px;color:#484848;transform:scaleX(0.9423);">21/08/2019 16:02</span>
<span class="t" id="t140" style="left:218.83px;top:586.22px;font-size:12.5px;line-height:12.5px;color:#484848;transform:scaleX(0.9325);">CT-e Nor...</span>
<span class="t" id="t141" style="left:288.30px;top:586.22px;font-size:12.5px;line-height:12.5px;color:#484848;">1</span>
<span class="t" id="t142" style="left:338.12px;top:586.22px;font-size:12.5px;line-height:12.5px;color:#484848;transform:scaleX(0.9117);">4530</span>
<span class="t" id="t143" style="left:408.00px;top:586.22px;font-size:12.5px;line-height:12.5px;color:#484848;transform:scaleX(0.9310);">42190852548435000179570010000045301000045302</span>
<span class="t" id="t144" style="left:708.00px;top:586.22px;font-size:12.5px;line-height:12.5px;color:#484848;transform:scaleX(0.9437);">21/08/2019 15:35</span>
<span class="t" id="t145" style="left:828.53px;top:586.22px;font-size:12.5px;line-height:12.5px;color:#484848;transform:scaleX(0.9340);">52.548.435/0001-79</span>
<span class="t" id="t146" style="left:958.74px;top:586.22px;font-size:12.5px;line-height:12.5px;color:#484848;transform:scaleX(0.8384);">JSL TRANSPORTES D...</span>
<span class="t" id="t147" style="left:1088.00px;top:586.22px;font-size:12.5px;line-height:12.5px;color:#484848;transform:scaleX(0.9346);">59.456.277/0007-61</span>
<span class="t" id="t148" style="left:1218.07px;top:586.22px;font-size:12.5px;line-height:12.5px;color:#484848;transform:scaleX(0.8937);">CT-E EMITIDO EM A...</span>
<span class="t" id="t149" style="left:1348.85px;top:586.22px;font-size:12.5px;line-height:12.5px;color:#484848;transform:scaleX(0.8963);">EMBHOM.9...</span>
<span class="t" id="t150" style="left:1466.38px;top:586.22px;font-size:12.5px;line-height:12.5px;color:#484848;transform:scaleX(0.8812);">R$ 875,00</span>
<svg style="position:absolute;left:1545.1px;top:582px" width="18" height="18" viewBox="0 0 18 18"><circle cx="9" cy="9" r="9" fill="#4caf50"/><polyline points="4.2,8.9 8.5,12.5 14.7,6.4" fill="none" stroke="#fff" stroke-width="2.4"/></svg>
<span class="t" id="t151" style="left:1597.69px;top:585.00px;font-size:13px;line-height:13px;color:#008000;transform:scaleX(0.9178);font-weight:bold;">Autorizado</span>
<span class="t" id="t152" style="left:1698.38px;top:585.00px;font-size:13px;line-height:13px;color:#008000;transform:scaleX(0.9215);font-weight:bold;">Aprovado</span>
<div style="position:absolute;left:5px;top:656px;width:1858px;height:1px;background:#dedede;"></div>
<svg style="position:absolute;left:13px;top:630.5px" width="10" height="10" viewBox="0 0 10 10"><path d="M4 0 H6 V4 H10 V6 H6 V10 H4 V6 H0 V4 H4 Z" fill="#999"/></svg>
<div style="position:absolute;left:51px;top:628px;width:13px;height:13px;border:1px solid #dcdcdc;background:#fff;"></div>
<span class="t" id="t153" style="left:88.61px;top:629.22px;font-size:12.5px;line-height:12.5px;color:#484848;transform:scaleX(0.9423);">21/08/2019 15:06</span>
<span class="t" id="t154" style="left:218.83px;top:629.22px;font-size:12.5px;line-height:12.5px;color:#484848;transform:scaleX(0.9325);">CT-e Nor...</span>
<span class="t" id="t155" style="left:288.30px;top:629.22px;font-size:12.5px;line-height:12.5px;color:#484848;">1</span>
<span class="t" id="t156" style="left:338.12px;top:629.22px;font-size:12.5px;line-height:12.5px;color:#484848;transform:scaleX(0.9117);">4529</span>
<span class="t" id="t157" style="left:408.00px;top:629.22px;font-size:12.5px;line-height:12.5px;color:#484848;transform:scaleX(0.9310);">42190852548435000179570010000045291000045298</span>
<span class="t" id="t158" style="left:708.00px;top:629.22px;font-size:12.5px;line-height:12.5px;color:#484848;transform:scaleX(0.9437);">21/08/2019 14:30</span>
<span class="t" id="t159" style="left:828.53px;top:629.22px;font-size:12.5px;line-height:12.5px;color:#484848;transform:scaleX(0.9340);">52.548.435/0001-79</span>
<span class="t" id="t160" style="left:958.69px;top:629.22px;font-size:12.5px;line-height:12.5px;color:#484848;transform:scaleX(0.8469);">TRANSP. LUCRO PRE...</span>
<span class="t" id="t161" style="left:1088.08px;top:629.22px;font-size:12.5px;line-height:12.5px;color:#484848;transform:scaleX(0.9340);">59.456.277/0007-61</span>
<span class="t" id="t162" style="left:1218.07px;top:629.22px;font-size:12.5px;line-height:12.5px;color:#484848;transform:scaleX(0.8937);">CT-E EMITIDO EM A...</span>
<span class="t" id="t163" style="left:1466.38px;top:629.22px;font-size:12.5px;line-height:12.5px;color:#484848;transform:scaleX(0.8812);">R$ 875,00</span>
<svg style="position:absolute;left:1545.1px;top:625px" width="18" height="18" viewBox="0 0 18 18"><circle cx="9" cy="9" r="9" fill="#f44336"/><path d="M5.6 5.6 L12.4 12.4 M12.4 5.6 L5.6 12.4" stroke="#fff" stroke-width="2.4"/></svg>
<span class="t" id="t164" style="left:1597.69px;top:628.00px;font-size:13px;line-height:13px;color:#008000;transform:scaleX(0.9178);font-weight:bold;">Autorizado</span>
<span class="t" id="t165" style="left:1698.38px;top:628.00px;font-size:13px;line-height:13px;color:#f00;transform:scaleX(0.8899);font-weight:bold;">Rejeitado</span>
<div style="position:absolute;left:5px;top:699px;width:1858px;height:1px;background:#dedede;"></div>
<svg style="position:absolute;left:13px;top:673.5px" width="10" height="10" viewBox="0 0 10 10"><path d="M4 0 H6 V4 H10 V6 H6 V10 H4 V6 H0 V4 H4 Z" fill="#999"/></svg>
<div style="position:absolute;left:51px;top:671px;width:13px;height:13px;border:1px solid #dcdcdc;background:#fff;"></div>
<span class="t" id="t166" style="left:88.61px;top:672.22px;font-size:12.5px;line-height:12.5px;color:#484848;transform:scaleX(0.9521);">20/08/2019 11:21</span>
<span class="t" id="t167" style="left:218.83px;top:672.22px;font-size:12.5px;line-height:12.5px;color:#484848;transform:scaleX(0.9325);">CT-e Nor...</span>
<span class="t" id="t168" style="left:288.30px;top:672.22px;font-size:12.5px;line-height:12.5px;color:#484848;">1</span>
<span class="t" id="t169" style="left:338.17px;top:672.22px;font-size:12.5px;line-height:12.5px;color:#484848;transform:scaleX(0.9080);">4527</span>
<span class="t" id="t170" style="left:408.00px;top:672.22px;font-size:12.5px;line-height:12.5px;color:#484848;transform:scaleX(0.9310);">42190852548435000179570010000045271000045277</span>
<span class="t" id="t171" style="left:708.00px;top:672.22px;font-size:12.5px;line-height:12.5px;color:#484848;transform:scaleX(0.9437);">20/08/2019 09:34</span>
<span class="t" id="t172" style="left:828.53px;top:672.22px;font-size:12.5px;line-height:12.5px;color:#484848;transform:scaleX(0.9340);">52.548.435/0001-79</span>
<span class="t" id="t173" style="left:958.74px;top:672.22px;font-size:12.5px;line-height:12.5px;color:#484848;transform:scaleX(0.8384);">JSL TRANSPORTES D...</span>
<span class="t" id="t174" style="left:1088.00px;top:672.22px;font-size:12.5px;line-height:12.5px;color:#484848;transform:scaleX(0.9346);">59.456.277/0007-61</span>
<span class="t" id="t175" style="left:1218.07px;top:672.22px;font-size:12.5px;line-height:12.5px;color:#484848;transform:scaleX(0.8937);">CT-E EMITIDO EM A...</span>
<span class="t" id="t176" style="left:1348.85px;top:672.22px;font-size:12.5px;line-height:12.5px;color:#484848;transform:scaleX(0.8963);">EMBHOM.9...</span>
<span class="t" id="t177" style="left:1466.38px;top:672.22px;font-size:12.5px;line-height:12.5px;color:#484848;transform:scaleX(0.8812);">R$ 875,00</span>
<svg style="position:absolute;left:1545.1px;top:668px" width="18" height="18" viewBox="0 0 18 18"><circle cx="9" cy="9" r="9" fill="#4caf50"/><polyline points="4.2,8.9 8.5,12.5 14.7,6.4" fill="none" stroke="#fff" stroke-width="2.4"/></svg>
<span class="t" id="t178" style="left:1597.69px;top:671.00px;font-size:13px;line-height:13px;color:#008000;transform:scaleX(0.9178);font-weight:bold;">Autorizado</span>
<span class="t" id="t179" style="left:1698.38px;top:671.00px;font-size:13px;line-height:13px;color:#008000;transform:scaleX(0.9215);font-weight:bold;">Aprovado</span>
<div style="position:absolute;left:5px;top:742px;width:1858px;height:1px;background:#dedede;"></div>
<svg style="position:absolute;left:13px;top:716.5px" width="10" height="10" viewBox="0 0 10 10"><path d="M4 0 H6 V4 H10 V6 H6 V10 H4 V6 H0 V4 H4 Z" fill="#999"/></svg>
<div style="position:absolute;left:51px;top:714px;width:13px;height:13px;border:1px solid #dcdcdc;background:#fff;"></div>
<span class="t" id="t180" style="left:88.61px;top:715.22px;font-size:12.5px;line-height:12.5px;color:#484848;transform:scaleX(0.9423);">12/08/2019 17:39</span>
<span class="t" id="t181" style="left:218.83px;top:715.22px;font-size:12.5px;line-height:12.5px;color:#484848;transform:scaleX(0.9325);">CT-e Nor...</span>
<span class="t" id="t182" style="left:288.30px;top:715.22px;font-size:12.5px;line-height:12.5px;color:#484848;">1</span>
<span class="t" id="t183" style="left:338.12px;top:715.22px;font-size:12.5px;line-height:12.5px;color:#484848;transform:scaleX(0.9117);">4525</span>
<span class="t" id="t184" style="left:408.00px;top:715.22px;font-size:12.5px;line-height:12.5px;color:#484848;transform:scaleX(0.9310);">42190806255692000103570010000045251000045250</span>
<span class="t" id="t185" style="left:708.00px;top:715.22px;font-size:12.5px;line-height:12.5px;color:#484848;transform:scaleX(0.9438);">12/08/2019 16:51</span>
<span class="t" id="t186" style="left:828.53px;top:715.22px;font-size:12.5px;line-height:12.5px;color:#484848;transform:scaleX(0.9340);">52.548.435/0001-79</span>
<span class="t" id="t187" style="left:958.74px;top:715.22px;font-size:12.5px;line-height:12.5px;color:#484848;transform:scaleX(0.8384);">JSL TRANSPORTES D...</span>
<span class="t" id="t188" style="left:1088.00px;top:715.22px;font-size:12.5px;line-height:12.5px;color:#484848;transform:scaleX(0.9346);">59.456.277/0007-61</span>
<span class="t" id="t189" style="left:1218.07px;top:715.22px;font-size:12.5px;line-height:12.5px;color:#484848;transform:scaleX(0.8937);">CT-E EMITIDO EM A...</span>
<span class="t" id="t190" style="left:1348.85px;top:715.22px;font-size:12.5px;line-height:12.5px;color:#484848;transform:scaleX(0.8963);">EMBHOM.9...</span>
<span class="t" id="t191" style="left:1466.38px;top:715.22px;font-size:12.5px;line-height:12.5px;color:#484848;transform:scaleX(0.8812);">R$ 875,00</span>
<svg style="position:absolute;left:1545.1px;top:711px" width="18" height="18" viewBox="0 0 18 18"><circle cx="9" cy="9" r="9" fill="#4caf50"/><polyline points="4.2,8.9 8.5,12.5 14.7,6.4" fill="none" stroke="#fff" stroke-width="2.4"/></svg>
<span class="t" id="t192" style="left:1597.69px;top:714.00px;font-size:13px;line-height:13px;color:#008000;transform:scaleX(0.9178);font-weight:bold;">Autorizado</span>
<span class="t" id="t193" style="left:1698.38px;top:714.00px;font-size:13px;line-height:13px;color:#008000;transform:scaleX(0.9215);font-weight:bold;">Aprovado</span>
<div style="position:absolute;left:1863px;top:226px;width:17px;height:687px;background:#f0f0f0;"></div>
<svg style="position:absolute;left:1867px;top:233.3px" width="9" height="5" viewBox="0 0 9 5"><path d="M0 5 L4.5 0 L9 5 Z" fill="#a3a3a3"/></svg>
<svg style="position:absolute;left:1867px;top:901px" width="9" height="5" viewBox="0 0 9 5"><path d="M0 0 L4.5 5 L9 0 Z" fill="#a3a3a3"/></svg>
<div style="position:absolute;left:5px;top:913px;width:1875px;height:1px;background:#e0e0e0;"></div>
<div style="position:absolute;left:5px;top:914px;width:1875px;height:49px;background:#fafafa;"></div>
<div style="position:absolute;left:5px;top:963px;width:1875px;height:1px;background:#e0e0e0;"></div>
<div style="position:absolute;left:87px;top:914px;width:34px;height:2px;background:#2d3fb5;"></div>
<svg style="position:absolute;left:23.5px;top:935px" width="8" height="10" viewBox="0 0 8 10"><rect x="0" y="0" width="1.2" height="10" fill="#ccc"/><path d="M2.5 5 L7.5 0 V10 Z" fill="#ccc"/></svg>
<svg style="position:absolute;left:62.5px;top:935px" width="7" height="10" viewBox="0 0 7 10"><path d="M0.5 5 L6 0 V10 Z" fill="#ccc"/></svg>
<svg style="position:absolute;left:100px;top:933px" width="8" height="12" viewBox="0 0 8 12"><path d="M1.1 2.6 L4 0.9 H6.3 V10.8 H3.9 V3.6 L1.9 4.6 Z" fill="#2d4bbf"/></svg>
<span class="t" id="t194" style="left:135.90px;top:932.15px;font-size:14px;line-height:14px;color:#333;">2</span>
<svg style="position:absolute;left:174.8px;top:935px" width="6" height="10" viewBox="0 0 6 10"><path d="M0 0 L5.5 5 L0 10 Z" fill="#888"/></svg>
<svg style="position:absolute;left:212.8px;top:935px" width="8" height="10" viewBox="0 0 8 10"><path d="M0 0 L5.5 5 L0 10 Z" fill="#888"/><rect x="5.8" y="0" width="1.4" height="10" fill="#888"/></svg>
<div style="position:absolute;left:240px;top:918px;width:71px;height:33px;border:1px solid #dcdcdc;border-radius:2px;background:#fafafa;"></div>
<span class="t" id="t195" style="left:254.57px;top:928.35px;font-size:14px;line-height:14px;color:#333;transform:scaleX(0.8447);">12</span>
<svg style="position:absolute;left:289px;top:935px" width="11" height="7" viewBox="0 0 11 7"><polyline points="0.8,0.8 5.5,5.8 10.2,0.8" fill="none" stroke="#ccc" stroke-width="2"/></svg>
<span class="t" id="t196" style="left:319.81px;top:928.35px;font-size:14px;line-height:14px;color:#333;transform:scaleX(0.9840);">itens por página</span>
<span class="t" id="t197" style="left:1645.80px;top:931.85px;font-size:14px;line-height:14px;color:#a3a3a3;transform:scaleX(0.9903);">Exibindo itens 1 - 12 de 17</span>
<svg style="position:absolute;left:1839px;top:932px" width="15" height="14" viewBox="0 0 15 14"><path d="M12.2 4 A5.6 5.6 0 1 0 12.8 8.8" fill="none" stroke="#777" stroke-width="1.7"/><path d="M14.6 0.5 V6.2 H8.9 Z" fill="#777"/></svg>
</body></html>
